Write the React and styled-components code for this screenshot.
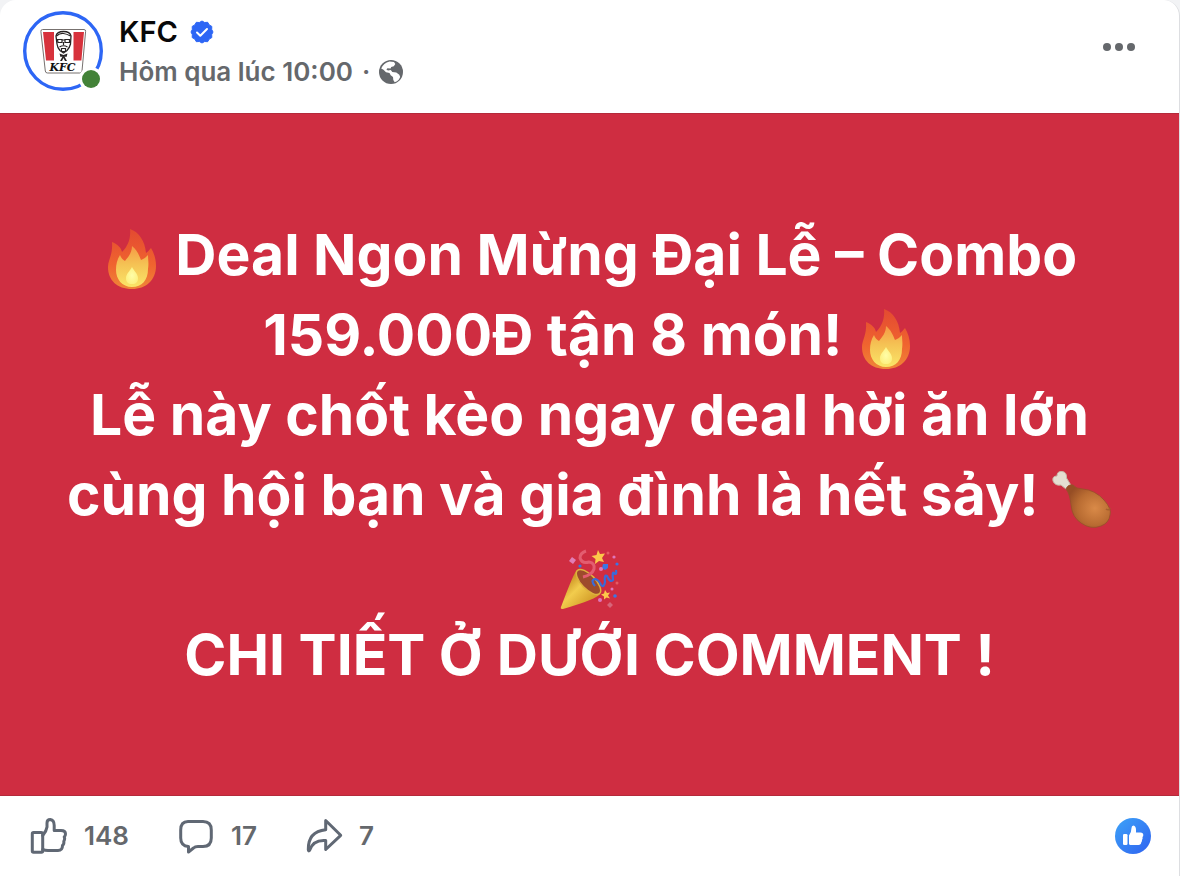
import React from 'react';
import styled, { createGlobalStyle } from "styled-components";


const GlobalStyle = createGlobalStyle`
  * {
    box-sizing: border-box;
  }

  body {
    margin: 0;
    background: #f2f3f5;
    font-family: Inter, "Liberation Sans", sans-serif;
    -webkit-font-smoothing: antialiased;
  }
`

const Card = styled.article`
  background: #ffffff;
  border-right: 1px solid #dddee1;
  border-radius: 16px 16px 0 0;
  overflow: hidden;
`

const Header = styled.header`
  display: flex;
  align-items: center;
  height: 113px;
  padding: 0 36px 12px 23px;
`

const AvatarLink = styled.a`
  flex: none;
  width: 80px;
  height: 80px;
  margin-right: 16px;

  svg {
    display: block;
  }
`

const Info = styled.div`
  flex: 1;
  min-width: 0;
  padding-top: 2px;
`

const NameRow = styled.div`
  display: flex;
  align-items: center;
  gap: 12px;
  height: 40px;
`

const Name = styled.a`
  color: #080809;
  font-size: 29px;
  font-weight: 600;
  line-height: 40px;
  text-decoration: none;
`

const Meta = styled.div`
  display: flex;
  align-items: center;
  gap: 9px;
  height: 40px;
  color: #65686c;
  font-size: 26px;
  font-weight: 600;
  line-height: 40px;
`

const Time = styled.a`
  color: inherit;
  text-decoration: none;
`

const MenuButton = styled.button`
  display: flex;
  margin-bottom: 8px;
  padding: 4px;
  border: 0;
  background: none;
  cursor: pointer;
`

const Banner = styled.section`
  padding: 101px 24px 100px;
  background: #cf2d41;
  border-top: 1px solid #b42a3b;
  border-bottom: 1px solid #b42a3b;
`

const Message = styled.p`
  margin: 0;
  color: #ffffff;
  font-size: 57px;
  font-weight: 700;
  line-height: 80px;
  text-align: center;
`

const Line = styled.span`
  display: block;
  height: 80px;
  white-space: nowrap;
`

const EmojiSvg = styled.svg`
  width: 60px;
  height: 60px;
  vertical-align: -14px;
`

const Footer = styled.footer`
  display: flex;
  align-items: center;
  justify-content: space-between;
  height: 80px;
  padding: 0 28px 0 30px;
`

const Actions = styled.div`
  display: flex;
  gap: 49px;
`

const ActionButton = styled.button`
  display: flex;
  align-items: center;
  gap: 16px;
  padding: 0;
  border: 0;
  background: none;
  color: #65686c;
  font-family: inherit;
  font-size: 26px;
  font-weight: 600;
  line-height: 40px;
  cursor: pointer;
`

const ReactionButton = styled.button`
  display: flex;
  padding: 0;
  border: 0;
  background: none;
  cursor: pointer;
`


const Avatar = () => (
    <svg width="80" height="80" viewBox="0 0 80 80">
        <circle cx="40" cy="40" r="38.3" fill="#fff" stroke="#2d66f5" strokeWidth="3.4"/>
        <path d="M19.500 18.500H61q1.800 0 1.600 2L59 60q-.2 2-2.200 2H24.500q-2 0-2.200-2L17.900 20.500q-.2-2 1.600-2z"
              fill="#fff" stroke="#77716f" strokeWidth="1"/>
        <path d="M20 21h11v28.500h-8zM50.500 21H61l-2.600 28.500h-7.900z" fill="#d7323c"/>
        <path d="M33 25q1-4.500 7.500-4.500T48 25l-.5 8q-1 4-3.500 6.500L40.500 42 37 39.500q-2.500-2.500-3-6.500z" fill="#fff"
              stroke="#272323" strokeWidth="1.300"/>
        <path d="M33.500 25q3.500-3 7-2.500t7 2.500M34.500 28.500H39v3h-4zM42 28.500h4.500v3H42zM39 29h3M40.500 31v3M36.500 36q4-2.500 8 0M38.500 37.500h4v3h-4z"
              fill="none" stroke="#272323" strokeWidth="1.200"/>
        <path d="M36.500 42.500l4 1.500 4-1.500-1 3.500-2-.5 2.500 4.500h-2l-1.500-3-1.500 3h-2l2.500-4.500-2 .5z" fill="#272323"/>
        <text x="39.500" y="60" textAnchor="middle" fontFamily="DejaVu Serif, serif" fontSize="11" fontStyle="italic"
              fontWeight="700" fill="#111">KFC</text>
        <circle cx="68" cy="68" r="12" fill="#fff"/>
        <circle cx="68" cy="68" r="9" fill="#438238"/>
    </svg>
)

const Verified = () => (
    <svg width="24" height="24" viewBox="0 0 24 24" role="img" aria-label="Verified">
        <path d="M12 1l2.700 1.500 3-.2 1.500 2.600 2.600 1.500-.1 3L23 12l-1.300 2.600.1 3-2.600 1.500-1.500 2.600-3-.2L12 23l-2.700-1.500-3 .2-1.500-2.600-2.600-1.500.1-3L1 12l1.300-2.600-.1-3 2.600-1.500 1.500-2.600 3 .2z"
              fill="#2d66f5" stroke="#2d66f5" strokeWidth="1" strokeLinejoin="round"/>
        <path d="M7 12.500l3.300 3.300L17 9" fill="none" stroke="#fff" strokeWidth="2" strokeLinecap="round"
              strokeLinejoin="round"/>
    </svg>
)

const Globe = () => (
    <svg width="24" height="24" viewBox="0 0 24 24" role="img" aria-label="Public">
        <circle cx="12" cy="12" r="12" fill="#65686c"/>
        <path d="M2.200 8.500Q4.500 3 10.500 1.600L15 2l1.300 2-1.500 2.300-2.600.7-.6 1.600-3.200-.4-1 1.300 1.600 1 2.800-.6 1.500 2 4 .7 3 2.200.9 2.200-1.300 2.500q-1.700 2.300-4.200 2.800l-1.400-2.300-.3-3-2.300-1.700L10.500 13 7 12.200 4.500 9.800z"
              fill="#fff"/>
    </svg>
)

const Dots = () => (
    <svg width="40" height="16" viewBox="0 0 40 16" fill="#65686c">
        <circle cx="8" cy="8" r="4"/>
        <circle cx="20" cy="8" r="4"/>
        <circle cx="32" cy="8" r="4"/>
    </svg>
)

const Fire = () => (
    <EmojiSvg viewBox="0 0 60 60" role="img" aria-label="🔥">
        <defs>
            <linearGradient id="flame" x1="0" y1="0" x2="0" y2="1">
                <stop offset="0" stopColor="#e34a31"/>
                <stop offset=".6" stopColor="#f0642f"/>
                <stop offset="1" stopColor="#ef8638"/>
            </linearGradient>
            <linearGradient id="flameInner" x1="0" y1="0" x2="0" y2="1">
                <stop offset="0" stopColor="#f59a45"/>
                <stop offset=".45" stopColor="#f5c254"/>
                <stop offset="1" stopColor="#fae568"/>
            </linearGradient>
            <radialGradient id="flameCore">
                <stop offset="0" stopColor="#fffda8"/>
                <stop offset="1" stopColor="#fdf182"/>
            </radialGradient>
        </defs>
        <path d="M28 0C37 3 43 12 44 24C46 23 47 21 49 19C52 24 54 30 54 37C54 51 44 60 30 60C15 60 6 51 6 38C6 31 11 26 10 13C15 15 19 18 20 23C26 17 29 9 28 0Z"
              fill="url(#flame)"/>
        <path d="M30 17C35 21 37 26 39 31C42 30 44 28 46 26C46 31 47 34 46 40C46 51 40 58 30 58C20 58 14 50 14 41C14 35 15 31 18 26C19 29 21 31 23 32C26 28 30 24 30 17Z"
              fill="url(#flameInner)"/>
        <path d="M30 38C32 42 36 45 36 49C36 53 34 55 30 55C26 55 24 53 24 49C24 45 28 42 30 38Z"
              fill="url(#flameCore)"/>
    </EmojiSvg>
)

const Drumstick = () => (
    <EmojiSvg viewBox="0 0 60 60" role="img" aria-label="🍗">
        <defs>
            <radialGradient id="meat" cx=".65" cy=".55" r=".65">
                <stop offset="0" stopColor="#d98a48"/>
                <stop offset=".6" stopColor="#b96c32"/>
                <stop offset="1" stopColor="#964e25"/>
            </radialGradient>
        </defs>
        <path d="M14 20L9 16Q3 17 1 12Q0 7 5 7Q5 2 10 2.500Q15 3 14.500 9L20 18Z" fill="#e5ded2" stroke="#c8b9a9"/>
        <path d="M14 20Q16 15 21 16Q24 20 31 20Q43 21 52 31Q60 40 58 46Q57 54 49 57Q39 61 29 54Q20 48 19 36Q18 25 14 20Z"
              fill="url(#meat)" stroke="#95502a" strokeWidth=".8"/>
        <path d="M54 40Q57 42 58 39" fill="none" stroke="#a65e2e" strokeWidth="1.500"/>
    </EmojiSvg>
)

const Popper = () => (
    <EmojiSvg viewBox="0 0 60 60" role="img" aria-label="🎉">
        <defs>
            <linearGradient id="cone" x1="0" y1="0" x2="1" y2="1">
                <stop offset=".2" stopColor="#c98e20"/>
                <stop offset=".45" stopColor="#f2cc4d"/>
                <stop offset=".75" stopColor="#d7a32d"/>
            </linearGradient>
        </defs>
        <path d="M17 21Q14 23 1 58Q0 60 3 60Q37 50 40 45Z" fill="url(#cone)"/>
        <ellipse cx="28.500" cy="33" rx="16" ry="7" transform="rotate(46 28.500 33)" fill="#9d4b2c" stroke="#deb13e"
                 strokeWidth="1.500"/>
        <path d="M26 2Q20 4 20 9Q22 15 29 13Q35 14 34 20Q32 26 23 28" fill="none" stroke="#e35d70" strokeWidth="3"/>
        <path d="M35 37Q30 31 35 30Q39 31 41 36Q44 39 45 33Q44 25 47 27Q50 34 53 31Q52 22 54 24Q57 27 56 21" fill="none"
              stroke="#386bd9" strokeWidth="2.200"/>
        <path d="M38 1l2 4 5-.5-3 4.500 2 4-5-1-4 3 .5-5-4-3 5-1z" fill="#fcc84a"/>
        <path d="M45 41l2 3 3-.5-2 3 2 3-3.500-1-2.500 2v-3l-3-2 3-1z" fill="#fcc84a"/>
        <path d="M12 8l4 3-3 4-4-3z" fill="#e17db5"/>
        <path d="M50 53l3 3-3 3-3-3z" fill="#d76579"/>
        <path d="M43 15l5 0 0 4-3 2-3-2z" fill="#3b76e4"/>
        <g fill="#df76ba">
            <circle cx="41" cy="20" r="2"/>
            <circle cx="54" cy="8" r="1.600"/>
            <circle cx="52" cy="40" r="1.500"/>
            <circle cx="40" cy="51" r="2"/>
        </g>
        <g fill="#3b76e4">
            <circle cx="20" cy="17" r="1.600"/>
            <circle cx="57" cy="15" r="1.600"/>
            <circle cx="55" cy="47" r="1.800"/>
        </g>
        <g fill="#e45b64">
            <circle cx="48" cy="4" r="1.500"/>
            <circle cx="57" cy="34" r="1.500"/>
        </g>
    </EmojiSvg>
)

const iconProps = {
    fill: "none",
    stroke: "#606874",
    strokeWidth: 3,
    strokeLinejoin: "round",
    strokeLinecap: "round",
}

const LikeIcon = () => (
    <svg width="38" height="38" viewBox="0 0 38 38" {...iconProps}>
        <path d="M3.500 15.500H11q1.700 0 1.700 1.700V34q0 1.200-1.200 1.200h-8q-1.200 0-1.200-1.200V16.700q0-1.200 1.200-1.200z"/>
        <path d="M12.700 18.500Q16.500 14 17 10V6Q17 2.500 20.300 2.500Q24.200 3 24.200 8.500V13.500H31Q35.500 13.500 35.500 17Q35.500 19 34.200 20Q35.300 21.500 33.800 24.500Q34.300 27 32.500 28.500Q32.500 33.500 28 33.500H18Q15 33.500 12.700 32.500"/>
    </svg>
)

const CommentIcon = () => (
    <svg width="37" height="38" viewBox="0 0 37 38" {...iconProps}>
        <path d="M10 4.500H25Q33.300 4.500 33.300 13V21Q33.300 29.500 25 29.500H20Q17 29.500 15.500 31L10.500 35V29.500Q2.700 29 2.700 21V13Q2.700 4.500 10 4.500Z"/>
    </svg>
)

const ShareIcon = () => (
    <svg width="37" height="38" viewBox="0 0 37 38" {...iconProps}>
        <path d="M19.700 3.500L34.700 18.300L19.700 32.500V23.500Q7 22.500 3.500 33.500Q2.500 34.500 2.300 32.500Q2 14.500 19.700 12.700Z"/>
    </svg>
)

const LikeBadge = () => (
    <svg width="36" height="36" viewBox="0 0 36 36">
        <defs>
            <linearGradient id="badge" x1="0" y1="0" x2="1" y2="1">
                <stop offset="0" stopColor="#3da3f8"/>
                <stop offset="1" stopColor="#2f62f0"/>
            </linearGradient>
        </defs>
        <circle cx="18" cy="18" r="18" fill="url(#badge)"/>
        <rect x="8" y="16" width="4.500" height="11" rx="1.300" fill="#fff"/>
        <path d="M14 17.500Q16.500 14 16.500 10Q16.500 7.500 18.500 7.500Q21 8 21 12V14.500H25.500Q28.300 14.500 28.300 17Q28.300 18.500 27.500 19Q28 20.500 27 22Q27.200 23.500 26.300 24.300Q26 27 23.500 27H15.500Q14 27 14 25.500Z"
              fill="#fff"/>
    </svg>
)


const actions = [
    {label: "Like", count: 148, Icon: LikeIcon},
    {label: "Comment", count: 17, Icon: CommentIcon},
    {label: "Share", count: 7, Icon: ShareIcon},
]

const App = () => {
    return (
        <>
            <GlobalStyle/>
            <Card>
                <Header>
                    <AvatarLink href="#" aria-label="KFC">
                        <Avatar/>
                    </AvatarLink>
                    <Info>
                        <NameRow>
                            <Name href="#">KFC</Name>
                            <Verified/>
                        </NameRow>
                        <Meta>
                            <Time href="#">Hôm qua lúc 10:00</Time>
                            <span>·</span>
                            <Globe/>
                        </Meta>
                    </Info>
                    <MenuButton aria-label="More">
                        <Dots/>
                    </MenuButton>
                </Header>
                <Banner>
                    <Message>
                        <Line><Fire/> Deal Ngon Mừng Đại Lễ – Combo</Line>
                        <Line>159.000Đ tận 8 món! <Fire/></Line>
                        <Line>Lễ này chốt kèo ngay deal hời ăn lớn</Line>
                        <Line>cùng hội bạn và gia đình là hết sảy! <Drumstick/></Line>
                        <Line><Popper/></Line>
                        <Line>CHI TIẾT Ở DƯỚI COMMENT !</Line>
                    </Message>
                </Banner>
                <Footer>
                    <Actions>
                        {
                            actions.map(({label, count, Icon}) => {
                                return (
                                    <ActionButton key={label} aria-label={`${label} ${count}`}>
                                        <Icon/>
                                        <span>{count}</span>
                                    </ActionButton>
                                )
                            })
                        }
                    </Actions>
                    <ReactionButton aria-label="Reactions">
                        <LikeBadge/>
                    </ReactionButton>
                </Footer>
            </Card>
        </>
    );
};

export default App;
